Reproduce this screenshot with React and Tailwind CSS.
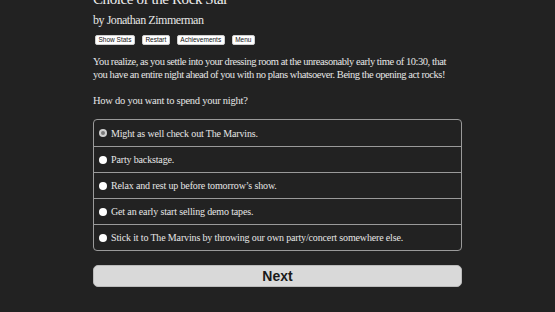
import React from "react";

const choices = [
  "Might as well check out The Marvins.",
  "Party backstage.",
  "Relax and rest up before tomorrow\u2019s show.",
  "Get an early start selling demo tapes.",
  "Stick it to The Marvins by throwing our own party/concert somewhere else.",
];

const serif = { fontFamily: '"Liberation Serif", "DejaVu Serif", serif' };
const sans = { fontFamily: '"Liberation Sans", Arial, sans-serif' };

export default function App() {
  return (
    <div className="w-[555px] h-[312px] overflow-hidden bg-[#222222] text-[#e6e6e6]">
      <div className="w-[369px] ml-[93px] -mt-[10px]" style={serif}>
        <h1 className="text-[15px] leading-[18px] tracking-[-0.4px] text-[#eeeeee]">
          Choice of the Rock Star
        </h1>
        <div className="text-[12px] leading-[16px] tracking-[-0.45px] mt-[4px]">
          by Jonathan Zimmerman
        </div>
        <div className="flex gap-[7px] mt-[7px] ml-[2px]" style={sans}>
          {["Show Stats", "Restart", "Achievements", "Menu"].map((b) => (
            <button
              key={b}
              className="bg-white text-[#111] text-[6.5px] leading-[8px] px-[2.5px] rounded-[2px] border border-[#cfcfcf]"
            >
              {b}
            </button>
          ))}
        </div>
        <p className="text-[10.5px] leading-[13px] tracking-[-0.45px] mt-[10px]">
          You realize, as you settle into your dressing room at the unreasonably early time of 10:30, that
          you have an entire night ahead of you with no plans whatsoever. Being the opening act rocks!
        </p>
        <p className="text-[10.5px] leading-[13px] tracking-[-0.25px] mt-[13px]">
          How do you want to spend your night?
        </p>
        <div className="mt-[12px] border border-[#9a9a9a] rounded-[4px]">
          {choices.map((c, i) => (
            <div
              key={c}
              className={
                "h-[26px] flex items-center pl-[5px] text-[10px] tracking-[-0.15px] " +
                (i > 0 ? "border-t border-[#9a9a9a]" : "")
              }
            >
              <span
                className={
                  "w-[8px] h-[8px] rounded-full mr-[4px] flex items-center justify-center " +
                  (i === 0 ? "bg-[#cfcfcf]" : "bg-white")
                }
              >
                {i === 0 && <span className="w-[4px] h-[4px] rounded-full bg-[#7a7a7a]" />}
              </span>
              {c}
            </div>
          ))}
        </div>
        <button
          className="mt-[14px] w-full h-[22px] rounded-[5px] bg-[#d9d9d9] text-[#1a1a1a] font-bold text-[14px] border border-[#bbb]"
          style={sans}
        >
          Next
        </button>
      </div>
    </div>
  );
}
